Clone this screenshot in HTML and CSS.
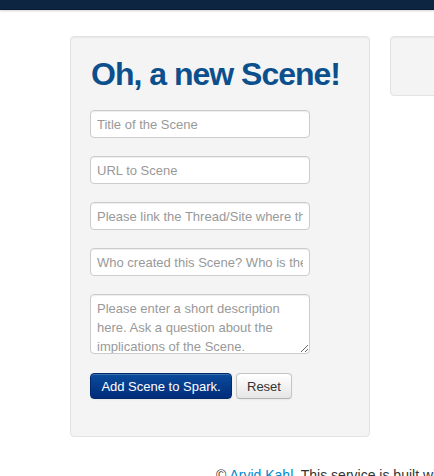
FILE: index.html
```html
<!DOCTYPE html>
<html>
<head>
<meta charset="utf-8">
<link rel="stylesheet" href="styles.css">
</head>
<body>
<div class="navbar"></div>
<div class="page">
  <div class="row">
    <div class="well main">
      <h1 class="title">Oh, a new Scene!</h1>
      <form class="form">
        <input class="field" type="text" placeholder="Title of the Scene">
        <input class="field" type="text" placeholder="URL to Scene">
        <input class="field" type="text" placeholder="Please link the Thread/Site where this Scene was found">
        <input class="field" type="text" placeholder="Who created this Scene? Who is the author?">
        <textarea class="field area" placeholder="Please enter a short description here. Ask a question about the implications of the Scene."></textarea>
        <div class="actions">
          <button type="button" class="btn btn-primary">Add Scene to Spark.</button>
          <button type="button" class="btn">Reset</button>
        </div>
      </form>
    </div>
    <div class="well side"></div>
  </div>
  <footer class="footer">© <a href="#" class="link">Arvid Kahl</a>. This service is built with love and Bootstrap.</footer>
</div>
</body>
</html>
```
FILE: styles.css
```css
html, body {
  margin: 0;
  padding: 0;
  background: #fff;
  font-family: "Liberation Sans", Arial, sans-serif;
  font-size: 14px;
  color: #333;
  overflow: hidden;
}
.navbar {
  height: 9px;
  background: #0d2541;
  border-bottom: 1px solid #0a1c33;
  box-shadow: 0 1px 2px rgba(0, 0, 0, 0.18);
}
.page {
  padding: 26px 0 0 70px;
}
.row {
  display: flex;
  gap: 20px;
  align-items: flex-start;
}
.well {
  box-sizing: border-box;
  background: #f4f4f4;
  border: 1px solid #e3e3e3;
  border-radius: 4px;
  box-shadow: inset 0 1px 1px rgba(0, 0, 0, 0.05);
  flex: none;
}
.main {
  width: 300px;
  height: 401px;
  padding: 19px;
}
.side {
  width: 300px;
  height: 60px;
}
.title {
  margin: 0 0 18px;
  padding-left: 1px;
  font-size: 32px;
  letter-spacing: -1px;
  line-height: 36px;
  font-weight: bold;
  color: #0c4f8d;
}
.form {
  display: flex;
  flex-direction: column;
  align-items: flex-start;
  margin: 0;
}
.field {
  box-sizing: border-box;
  width: 220px;
  height: 28px;
  margin: 0 0 18px;
  padding: 4px 6px;
  border: 1px solid #ccc;
  border-radius: 4px;
  background: #fff;
  font-family: "Liberation Sans", Arial, sans-serif;
  font-size: 13px;
  color: #555;
  box-shadow: inset 0 1px 1px rgba(0, 0, 0, 0.075);
}
.field::placeholder {
  color: #999;
}
.area {
  height: 60px;
  line-height: 19px;
  padding: 4px 6px;
  resize: both;
  margin-bottom: 19px;
}
.actions {
  display: flex;
  gap: 4px;
}
.btn {
  box-sizing: border-box;
  height: 26px;
  padding: 0 10px;
  white-space: nowrap;
  font-family: "Liberation Sans", Arial, sans-serif;
  font-size: 13px;
  color: #333;
  border: 1px solid #c5c5c5;
  border-bottom-color: #b3b3b3;
  border-radius: 4px;
  background: linear-gradient(#ffffff, #e6e6e6);
  box-shadow: inset 0 1px 0 rgba(255, 255, 255, 0.2), 0 1px 2px rgba(0, 0, 0, 0.05);
}
.btn-primary {
  width: 142px;
  padding: 0;
  color: #fff;
  border-color: #002a6b;
  background: linear-gradient(#0b4c9c, #002b7a);
}
.footer {
  margin: 28px 0 0 146px;
  white-space: nowrap;
  font-size: 14px;
  line-height: 20px;
}
.link {
  color: #0088cc;
  text-decoration: none;
}
```
